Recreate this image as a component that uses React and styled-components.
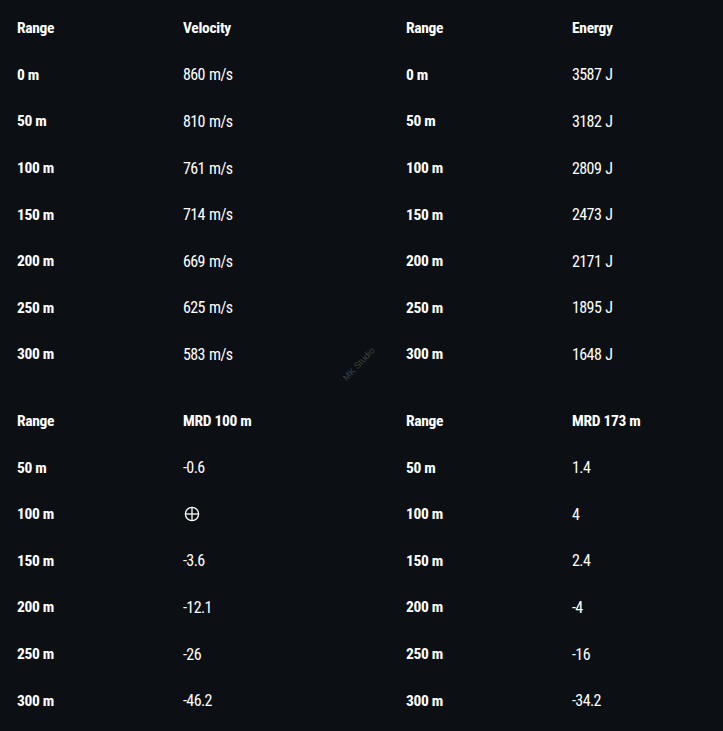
import React from "react";
import styled, { createGlobalStyle } from "styled-components";

const Global = createGlobalStyle`
  html, body { margin: 0; padding: 0; background: #0c1014; }
  body {
    font-family: "Roboto Condensed", "Roboto", "Liberation Sans", sans-serif;
    font-stretch: 75%;
    color: #ffffff;
  }
`;

const Page = styled.div`
  position: relative;
  width: 723px;
  min-height: 731px;
  background: #0c1014;
  box-sizing: border-box;
  padding: 5px 0 0 17px;
  display: flex;
  flex-direction: column;
  gap: 20px;
`;

const Section = styled.div`
  display: grid;
  grid-template-columns: 166px 223px 166px 1fr;
  grid-auto-rows: 46.6px;
  align-items: center;
`;

const Head = styled.div`
  font-weight: 700;
  font-size: 15.5px;
  letter-spacing: -0.3px;
`;

const Label = styled.div`
  font-weight: 700;
  font-size: 15.5px;
  letter-spacing: -0.3px;
`;

const Value = styled.div`
  font-weight: 400;
  font-size: 16px;
  letter-spacing: -0.6px;
  word-spacing: 1px;
  display: flex;
  align-items: center;
`;

const ZeroIcon = styled.svg`
  display: block;
  width: 16px;
  height: 16px;
  margin-left: 1px;
`;

const Watermark = styled.div`
  position: absolute;
  left: 338px;
  top: 359px;
  font-family: "Liberation Sans", sans-serif;
  font-size: 9px;
  line-height: 10px;
  color: #3e4246;
  transform: rotate(-47deg);
  white-space: nowrap;
`;

const top = [
  ["0 m", "860 m/s", "0 m", "3587 J"],
  ["50 m", "810 m/s", "50 m", "3182 J"],
  ["100 m", "761 m/s", "100 m", "2809 J"],
  ["150 m", "714 m/s", "150 m", "2473 J"],
  ["200 m", "669 m/s", "200 m", "2171 J"],
  ["250 m", "625 m/s", "250 m", "1895 J"],
  ["300 m", "583 m/s", "300 m", "1648 J"],
];

const bottom = [
  ["50 m", "-0.6", "50 m", "1.4"],
  ["100 m", "ZERO", "100 m", "4"],
  ["150 m", "-3.6", "150 m", "2.4"],
  ["200 m", "-12.1", "200 m", "-4"],
  ["250 m", "-26", "250 m", "-16"],
  ["300 m", "-46.2", "300 m", "-34.2"],
];

function Zero() {
  return (
    <ZeroIcon viewBox="0 0 16 16" aria-label="zero">
      <circle cx="8" cy="8" r="6.6" fill="none" stroke="#fff" strokeWidth="1.3" />
      <line x1="8" y1="1.4" x2="8" y2="14.6" stroke="#fff" strokeWidth="1.3" />
      <line x1="1.4" y1="8" x2="14.6" y2="8" stroke="#fff" strokeWidth="1.3" />
    </ZeroIcon>
  );
}

function Rows({ rows }) {
  return rows.map((r, i) => (
    <React.Fragment key={i}>
      <Label>{r[0]}</Label>
      <Value>{r[1] === "ZERO" ? <Zero /> : r[1]}</Value>
      <Label>{r[2]}</Label>
      <Value>{r[3]}</Value>
    </React.Fragment>
  ));
}

export default function App() {
  return (
    <>
      <Global />
      <Page>
        <Section>
          <Head>Range</Head>
          <Head>Velocity</Head>
          <Head>Range</Head>
          <Head>Energy</Head>
          <Rows rows={top} />
        </Section>
        <Section>
          <Head>Range</Head>
          <Head>MRD 100 m</Head>
          <Head>Range</Head>
          <Head>MRD 173 m</Head>
          <Rows rows={bottom} />
        </Section>
        <Watermark>MK Studio</Watermark>
      </Page>
    </>
  );
}
